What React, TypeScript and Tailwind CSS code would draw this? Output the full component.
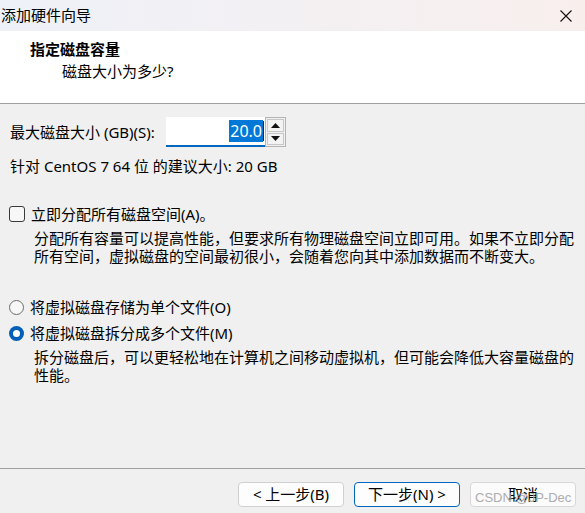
const font = "font-['Noto_Sans','Noto_Sans_CJK_SC',sans-serif]"

const Spinner = () => {
  return (
    <div className="flex flex-col w-[21px] h-[30px] border border-[#b4b4b4] bg-[#f0f0f0] p-px gap-px">
      <div className="flex-1 flex items-center justify-center border border-[#c8c8c8] bg-[#f3f3f3]">
        <svg width="9" height="5" viewBox="0 0 9 5"><path d="M4.5 0L9 5H0z" fill="#111" /></svg>
      </div>
      <div className="flex-1 flex items-center justify-center border border-[#c8c8c8] bg-[#f3f3f3]">
        <svg width="9" height="5" viewBox="0 0 9 5"><path d="M0 0h9L4.5 5z" fill="#111" /></svg>
      </div>
    </div>
  )
}

const App = () => {
  return (
    <div className={`relative w-[585px] h-[513px] overflow-hidden bg-[#f0f0f0] text-[15px] text-black ${font}`}>
      {/* Title bar */}
      <div className="h-[31px] flex items-center justify-between bg-gradient-to-r from-[#eef1f8] to-[#f8efed]">
        <span className="pl-px leading-none">添加硬件向导</span>
        <svg className="mr-[13px]" width="12" height="12" viewBox="0 0 12 12">
          <path d="M0.5 0.5L11.5 11.5M11.5 0.5L0.5 11.5" stroke="#111" strokeWidth="1.1" />
        </svg>
      </div>

      {/* Header */}
      <div className="h-[73px] bg-white border-b border-[#a0a0a0] pt-[7px]">
        <div className="pl-[30px] font-bold leading-[22px]">指定磁盘容量</div>
        <div className="pl-[62px] leading-[22px]">磁盘大小为多少?</div>
      </div>

      {/* Body */}
      <div className="pt-[13px]">
        <div className="flex items-center pl-[10px] h-[30px]">
          <span className="w-[156px]">最大磁盘大小 (GB)(S):</span>
          <div className="w-[99px] h-[30px] bg-white border-b-2 border-[#0067c0] flex items-center justify-end pr-px">
            <span className="bg-[#0078d7] text-white text-[16px] leading-[22px] px-px">20.0</span>
            <span className="w-px h-[20px] bg-[#222]" />
          </div>
          <Spinner />
        </div>

        <div className="pl-[10px] mt-[9px] leading-[20px]">针对 CentOS 7 64 位 的建议大小: 20 GB</div>

        <div className="flex items-center gap-[6px] pl-[9px] mt-[28px] h-[20px]">
          <div className="w-[16px] h-[16px] rounded-[3px] border border-[#3a3a3a] bg-[#f7f7f7]" />
          <span>立即分配所有磁盘空间(A)。</span>
        </div>
        <div className="pl-[34px] mt-[5px] leading-[18px] whitespace-nowrap">
          分配所有容量可以提高性能，但要求所有物理磁盘空间立即可用。如果不立即分配
          <br />
          所有空间，虚拟磁盘的空间最初很小，会随着您向其中添加数据而不断变大。
        </div>

        <div className="flex items-center gap-[6px] pl-[9px] mt-[32px] h-[20px]">
          <div className="w-[15px] h-[15px] rounded-full border border-[#6b6b6b] bg-[#f7f7f7]" />
          <span>将虚拟磁盘存储为单个文件(O)</span>
        </div>
        <div className="flex items-center gap-[6px] pl-[9px] mt-[6px] h-[20px]">
          <div className="w-[15px] h-[15px] rounded-full bg-[#005fb8] flex items-center justify-center">
            <div className="w-[7px] h-[7px] rounded-full bg-white" />
          </div>
          <span>将虚拟磁盘拆分成多个文件(M)</span>
        </div>
        <div className="pl-[34px] mt-[5px] leading-[18px] whitespace-nowrap">
          拆分磁盘后，可以更轻松地在计算机之间移动虚拟机，但可能会降低大容量磁盘的
          <br />
          性能。
        </div>
      </div>

      {/* Footer */}
      <div className="absolute left-0 right-0 bottom-0 h-[45px] border-t border-[#a0a0a0]">
        <div className="flex justify-end gap-[10px] pr-[9px] pt-[13px]">
          <button className="w-[106px] h-[25px] rounded-[4px] border border-[#d0d0d0] bg-[#fdfdfd] leading-none">
            &lt; 上一步(B)
          </button>
          <button className="w-[106px] h-[25px] rounded-[4px] border border-[#0067c0] bg-[#fdfdfd] leading-none">
            下一步(N) &gt;
          </button>
          <button className="w-[106px] h-[25px] rounded-[4px] border border-[#d8d8d8] bg-[#fbfbfb] leading-none">
            取消
          </button>
        </div>
      </div>

      {/* Watermark */}
      <div className="absolute left-[475px] top-[490px] text-[13px] leading-[16px] text-[#a5a5a5] font-['Liberation_Sans',sans-serif] opacity-90">
        CSDN @JP-Dec
      </div>
    </div>
  )
}

export default App
